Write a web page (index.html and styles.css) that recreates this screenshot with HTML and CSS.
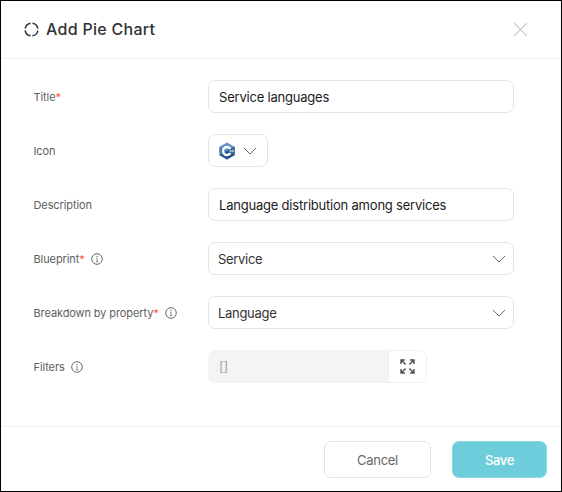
FILE: index.html
```html
<!DOCTYPE html>
<html lang="en">
<head>
<meta charset="utf-8">
<title>Add Pie Chart</title>
<link rel="stylesheet" href="styles.css">
</head>
<body>
<svg class="defs" width="0" height="0" aria-hidden="true">
  <symbol id="info" viewBox="0 0 12 12"><circle cx="6" cy="6" r="5.3" fill="none" stroke="currentColor" stroke-width=".95"/><path d="M5.2 5.1H6.1V8.8M4.9 8.8H7.3" fill="none" stroke="currentColor" stroke-width=".7"/><circle cx="6" cy="3.4" r=".55" fill="currentColor"/></symbol>
  <symbol id="chevron" viewBox="0 0 14 8"><path d="M1 1L7 7L13 1" fill="none" stroke="currentColor" stroke-width="1"/></symbol>
</svg>
<form class="dialog">
  <header class="header">
    <svg class="pie" viewBox="0 0 14 14"><circle cx="7" cy="7" r="6" pathLength="100" transform="rotate(-81 7 7)"/></svg>
    <h1 class="title">Add Pie Chart</h1>
    <svg class="close" viewBox="0 0 14 14"><path d="M1 1L13 13M13 1L1 13"/></svg>
  </header>
  <main class="fields">
    <div class="label">Title<span class="required">*</span></div>
    <div class="control input">Service languages</div>
    <div class="label">Icon</div>
    <div class="control icon-select">
      <svg class="language" viewBox="0 0 16 18">
        <path d="M8 .5L15.5 4.7V13.2L8 17.5L.5 13.2V4.7Z" fill="#6595c6"/>
        <path d="M15.5 4.7V13.2L8 17.5L.5 13.2L7.5 9Z" fill="#28568b"/>
        <path d="M.5 4.7L7.5 9L.5 13.2Z" fill="#4a7db3"/>
        <path d="M8 9L15.5 4.7V13.2Z" fill="#32649b"/>
        <path d="M11.4 6.8A4 4 0 1 0 11.4 11.2" fill="none" stroke="#fff" stroke-width="2.3"/>
        <path d="M10.3 9H15M11.7 7.8V10.2M13.8 7.8V10.2" stroke="#dce6f1" stroke-width=".7"/>
      </svg>
      <svg class="chevron"><use href="#chevron"/></svg>
    </div>
    <div class="label">Description</div>
    <div class="control input">Language distribution among services</div>
    <div class="label">Blueprint<span class="required">*</span><svg class="info"><use href="#info"/></svg></div>
    <div class="control select"><span>Service</span><svg class="chevron"><use href="#chevron"/></svg></div>
    <div class="label">Breakdown by property<span class="required">*</span><svg class="info"><use href="#info"/></svg></div>
    <div class="control select"><span>Language</span><svg class="chevron"><use href="#chevron"/></svg></div>
    <div class="label">Filters<svg class="info"><use href="#info"/></svg></div>
    <div class="filter">
      <div class="filter-value">[]</div>
      <div class="expand"><svg viewBox="0 0 14 14"><path d="M1 4.6V1H4.6M1 1L5.2 5.2M9.4 1H13V4.6M13 1L8.8 5.2M1 9.4V13H4.6M1 13L5.2 8.8M13 9.4V13H9.4M13 13L8.8 8.8"/></svg></div>
    </div>
  </main>
  <footer class="footer">
    <button class="button" type="button">Cancel</button>
    <button class="button save" type="button">Save</button>
  </footer>
</form>
</body>
</html>
```
FILE: styles.css
```css
* { box-sizing: border-box; }
body { margin: 0; font-family: Inter, "Liberation Sans", sans-serif; background: #fff; }
svg { display: block; flex: none; }
.defs { position: absolute; }
.dialog { width: 562px; height: 492px; border: 1px solid #000; display: flex; flex-direction: column; }
.header { height: 58px; border-bottom: 1px solid #f0f0f0; display: flex; align-items: center; padding: 0 33px 1px 23px; }
.pie { width: 15px; height: 15px; fill: none; stroke: #333; stroke-width: 1.4; stroke-dasharray: 20 5; }
.title { margin: 0 auto 0 7px; font: 500 16px/24px Inter, sans-serif; letter-spacing: .28px; color: #333; white-space: nowrap; }
.close { width: 15px; height: 15px; fill: none; stroke: #c4c4c4; stroke-width: 1; }
.fields { flex: 1; display: grid; grid-template-columns: 174px 306px; grid-auto-rows: 33px; row-gap: 21px; padding: 21px 0 0 33px; align-items: center; }
.label { display: flex; align-items: center; margin-left: -.5px; font-size: 11px; letter-spacing: -.1px; color: #606060; white-space: nowrap; }
.required { color: #ff5630; }
.info { width: 12px; height: 12px; margin-left: 6.5px; color: #606060; }
.control { height: 33px; border: 1px solid #e5e5e5; border-radius: 7px; display: flex; align-items: center; font-size: 13px; letter-spacing: -.21px; color: #1c1c1c; white-space: nowrap; }
.input { padding-left: 10px; }
.icon-select { width: 60px; padding: 0 10px; justify-content: space-between; }
.language { width: 16px; height: 18px; }
.chevron { width: 14px; height: 8px; color: #6b6b6b; }
.select { padding: 0 7px 0 9px; justify-content: space-between; color: #333; letter-spacing: -.3px; }
.filter { width: 219px; height: 33px; display: flex; border-radius: 7px; overflow: hidden; }
.filter-value { flex: 1; padding-left: 11px; line-height: 33px; font-size: 13px; letter-spacing: -.3px; color: #a5a5a5; background: #f4f4f4; }
.expand { width: 39px; border: 1px solid #efefef; border-radius: 0 7px 7px 0; display: flex; align-items: center; justify-content: center; }
.expand svg { width: 15px; height: 15px; fill: none; stroke: #505050; stroke-width: 1.4; }
.footer { height: 65px; border-top: 1px solid #efefef; display: flex; gap: 21px; justify-content: flex-end; padding: 14px 14px 0 0; }
.button { width: 107px; height: 37px; padding: 0; border: 1px solid #e4e4e4; border-radius: 7px; background: #fff; color: #666; font: 13px Inter, sans-serif; letter-spacing: -.3px; }
.save { width: 95px; background: #6dcddb; border-color: #8ed8e3; color: #fff; font-weight: 500; }
```
